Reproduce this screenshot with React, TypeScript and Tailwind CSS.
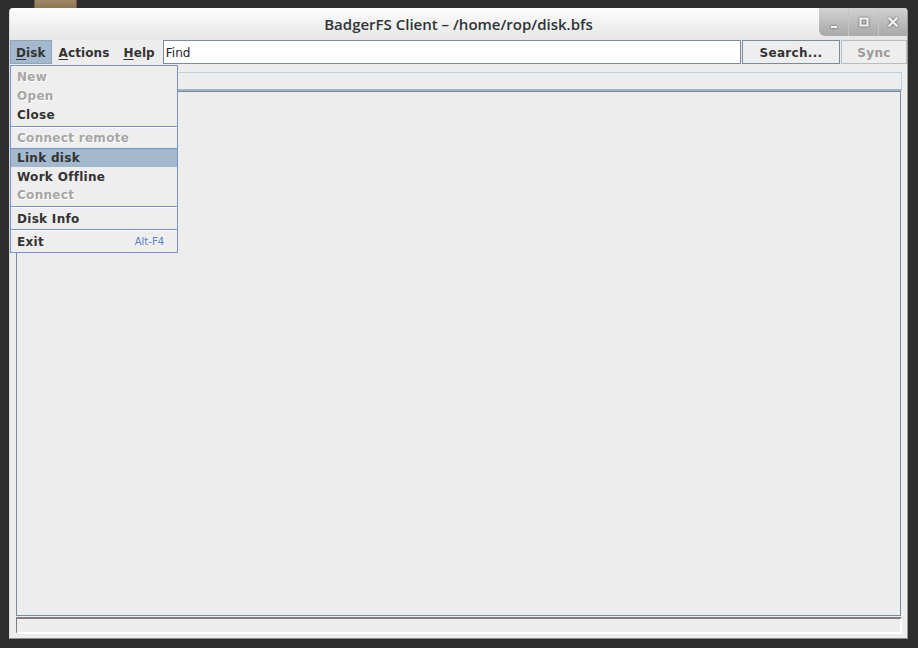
import React from 'react';

const menuFont = "font-['DejaVu_Sans',sans-serif] text-[12px] font-bold tracking-[0.3px]";

type Item =
  | { kind: 'item'; label: string; h: number; disabled?: boolean; active?: boolean; accel?: string }
  | { kind: 'sep'; pad: number; white?: boolean };

const heights: Record<number, string> = { 18: 'h-[18px]', 19: 'h-[19px]', 20: 'h-[20px]', 21: 'h-[21px]' };
const pads: Record<number, string> = { 0: 'pt-0', 1: 'pt-[1px]', 2: 'pt-[2px]' };

const diskMenu: Item[] = [
  { kind: 'item', label: 'New', h: 19, disabled: true },
  { kind: 'item', label: 'Open', h: 19, disabled: true },
  { kind: 'item', label: 'Close', h: 19 },
  { kind: 'sep', pad: 2, white: true },
  { kind: 'item', label: 'Connect remote', h: 19, disabled: true },
  { kind: 'sep', pad: 1 },
  { kind: 'item', label: 'Link disk', h: 18, active: true },
  { kind: 'item', label: 'Work Offline', h: 19 },
  { kind: 'item', label: 'Connect', h: 18, disabled: true },
  { kind: 'sep', pad: 2, white: true },
  { kind: 'item', label: 'Disk Info', h: 21 },
  { kind: 'sep', pad: 0, white: true },
  { kind: 'item', label: 'Exit', h: 21, accel: 'Alt-F4' },
];

const WindowButtons = () => (
  <div className="absolute right-0 top-0 flex h-[28px] w-[88px] rounded-bl-[6px] rounded-tr-[4px] bg-linear-to-b from-[#d2d2d2] to-[#a8a8a8]">
    <div className="flex w-[29px] items-center justify-center">
      <svg width="10" height="10" viewBox="0 0 10 10" className="mt-[6px] drop-shadow-[0_0_1px_rgba(0,0,0,0.6)]">
        <rect x="2" y="6" width="6" height="2" fill="#f4f4f4" />
      </svg>
    </div>
    <div className="flex w-[30px] items-center justify-center border-l border-[#c4c4c4]">
      <svg width="12" height="12" viewBox="0 0 12 12" className="drop-shadow-[0_0_1px_rgba(0,0,0,0.6)]">
        <rect x="2.5" y="2.5" width="7" height="7" fill="none" stroke="#f4f4f4" strokeWidth="2" />
      </svg>
    </div>
    <div className="flex w-[29px] items-center justify-center border-l border-[#c4c4c4]">
      <svg width="12" height="12" viewBox="0 0 12 12" className="drop-shadow-[0_0_1px_rgba(0,0,0,0.6)]">
        <path d="M2.5 2.5 L9.5 9.5 M9.5 2.5 L2.5 9.5" stroke="#f4f4f4" strokeWidth="2.2" strokeLinecap="square" />
      </svg>
    </div>
  </div>
);

const DropMenu = () => (
  <div className={`absolute left-0 top-[57px] z-10 w-[168px] border border-[#7392cf] bg-[#eeeeee] pt-[1px] ${menuFont}`}>
    {diskMenu.map((it, i) =>
      it.kind === 'sep' ? (
        <div key={i} className={pads[it.pad]}>
          <div className={`border-t border-[#7392cf] ${it.white ? 'border-b border-b-white' : ''}`} />
        </div>
      ) : (
        <div
          key={i}
          className={`flex ${heights[it.h]} items-center justify-between pl-[6px] ${
            it.active ? 'bg-[#a4b9cd]' : ''
          } ${it.disabled ? 'text-[#a6a6a6] [text-shadow:1px_1px_0_#ffffff]' : 'text-[#333333]'}`}
        >
          <span>{it.label}</span>
          {it.accel && (
            <span className="pr-[13px] text-[10px] font-normal tracking-normal text-[#5d80c3]">{it.accel}</span>
          )}
        </div>
      )
    )}
  </div>
);

export default function App() {
  return (
    <div className="relative h-[648px] w-[918px] overflow-hidden bg-[#2d2d2d] pl-[9px] pt-[8px]">
      {/* desktop item peeking behind the window */}
      <div className="absolute left-[34px] top-0 h-[8px] w-[43px] border-x border-[#6e5d44] bg-linear-to-b from-[#a08867] to-[#8c7656]" />

      <div className="relative flex h-[631px] w-[899px] flex-col rounded-t-[4px] border-b border-r border-l border-b-[#8c8c8c] border-r-[#9a9a9a] border-l-[#dcdcdc] bg-[#ededed] pb-[4px]">
        {/* title bar */}
        <div className="relative flex h-[32px] shrink-0 items-center justify-center rounded-t-[4px] bg-linear-to-b from-[#fdfdfd] to-[#e6e6e6]">
          <span className="font-['Open_Sans',sans-serif] text-[15px] font-semibold text-[#2e3436]">
            BadgerFS Client – /home/rop/disk.bfs
          </span>
          <WindowButtons />
        </div>

        {/* menu bar + search */}
        <div className="flex h-[24px] shrink-0 items-stretch font-['DejaVu_Sans',sans-serif] text-[12px] font-bold tracking-[0.1px] text-[#333333]">
          <div className="flex items-center border border-[#8fa5bc] bg-[#a4b9cd] pl-[5px] pr-[5px] pt-[1px]">
            <span className="underline underline-offset-[2px]">D</span>isk
          </div>
          <div className="flex items-center px-[7px] pt-[1px]">
            <span className="underline underline-offset-[2px]">A</span>ctions
          </div>
          <div className="flex items-center px-[7px] pt-[1px]">
            <span className="underline underline-offset-[2px]">H</span>elp
          </div>
          <div className="ml-[1px] flex flex-1 items-center border border-[#7d8b99] bg-white pl-[2px] pt-[1px] font-normal tracking-normal text-[#222]">
            Find
          </div>
          <div className="ml-[1px] flex w-[98px] items-center justify-center border border-[#7d8b99] bg-[#eeeeee] pt-[1px] tracking-[0.3px] text-[#333333]">
            Search...
          </div>
          <div className="ml-[1px] flex w-[66px] items-center justify-center border border-[#b4bcc4] bg-[#eeeeee] pt-[1px] tracking-[0.3px] text-[#9a9a9a]">
            Sync
          </div>
        </div>

        {/* tab strip */}
        <div className="ml-[6px] mr-[5px] mt-[8px] h-[19px] shrink-0 border border-b-2 border-[#b9d1e8] border-b-[#9fb4c8]" />

        {/* main panel */}
        <div className="ml-[6px] mr-[6px] flex-1 border border-[#7d8b99] bg-[#ededed]" />

        {/* status bar */}
        <div className="ml-[6px] mr-[5px] mt-[1px] h-[17px] shrink-0 border-l border-t-2 border-b-2 border-r-2 border-l-[#7f7f7f] border-t-[#7f7f7f] border-b-white border-r-white" />

        <DropMenu />
      </div>
    </div>
  );
}
